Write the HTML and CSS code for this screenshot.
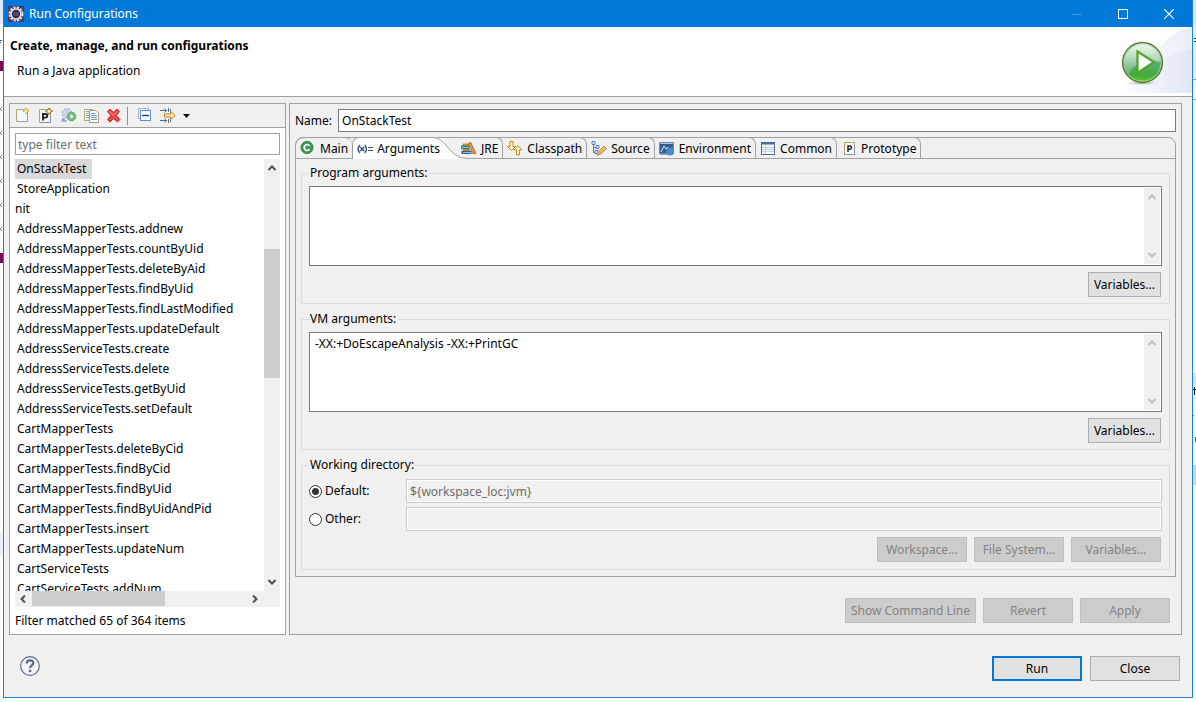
FILE: index.html
```html
<!DOCTYPE html>
<html lang="en">
<head>
  <meta charset="UTF-8">
  <title>Run Configurations</title>
  <link rel="stylesheet" href="styles.css">
</head>
<body>

  <!-- Editor window showing behind the dialog, left -->
  <svg class="behind" viewBox="0 0 3 702" aria-hidden="true">
    <rect width="3" height="24" fill="#dfe6f5"/>
    <path d="M0 40.500h2M0 42.500h1" stroke="#33507e"/>
    <rect y="61" width="3" height="10" fill="#7f0055"/>
    <path d="M2 107l-2 2 2 2M2 131l-2 2 2 2M2 155l-2 2 2 2M2 179l-2 2 2 2M2 203l-2 2 2 2M2 227l-2 2 2 2" fill="none" stroke="#6f8fd6"/>
    <rect y="253" width="3" height="10" fill="#7f0055"/>
    <rect y="532" width="3" height="24" fill="#e8f0fc"/>
  </svg>

  <div class="dialog">
    <!-- Title bar -->
    <div class="titlebar">
      <svg class="icon" viewBox="0 0 16 16">
        <rect width="16" height="16" fill="#4b3a6e"/>
        <circle cx="8" cy="8" r="6.500" fill="none" stroke="#e9e4dc" stroke-width="2" stroke-dasharray="2.200 1.200"/>
        <circle cx="8" cy="8" r="5" fill="#35294f" stroke="#e9e4dc" stroke-width="1.600"/>
        <path d="M5 7h6M5 9h6" stroke="#6f6690"/>
      </svg>
      <span class="title">Run Configurations</span>
      <div class="win-buttons">
        <button type="button" aria-label="Minimize" disabled><svg viewBox="0 0 10 10"><path d="M0 5.500h10" stroke="#3f9ae6"/></svg></button>
        <button type="button" aria-label="Maximize"><svg viewBox="0 0 10 10"><rect x=".5" y=".5" width="9" height="9" fill="none" stroke="#fff"/></svg></button>
        <button type="button" aria-label="Close window"><svg viewBox="0 0 10 10"><path d="M0 0l10 10M10 0L0 10" stroke="#fff" stroke-width="1.200"/></svg></button>
      </div>
    </div>

    <!-- Header -->
    <div class="header">
      <div class="header-text">
        <h1>Create, manage, and run configurations</h1>
        <p>Run a Java application</p>
      </div>
      <svg class="banner" viewBox="0 0 78 69">
        <defs>
          <linearGradient id="sky"><stop offset="0" stop-color="#fff"/><stop offset="1" stop-color="#dfe6f7"/></linearGradient>
          <linearGradient id="sky2" x1="0" y1="1" x2="1" y2="0"><stop offset="0" stop-color="#fff"/><stop offset="1" stop-color="#e6ecf8"/></linearGradient>
          <linearGradient id="ball" x1="0" y1="0" x2="0" y2="1"><stop offset="0" stop-color="#b5dcb4"/><stop offset=".5" stop-color="#5fae72"/><stop offset=".8" stop-color="#45a844"/><stop offset="1" stop-color="#5cc81c"/></linearGradient>
          <linearGradient id="shine" x1="0" y1="0" x2="0" y2="1"><stop offset="0" stop-color="#fff" stop-opacity=".75"/><stop offset="1" stop-color="#fff" stop-opacity=".15"/></linearGradient>
          <radialGradient id="shade"><stop offset="0" stop-color="#999"/><stop offset="1" stop-color="#fff" stop-opacity="0"/></radialGradient>
        </defs>
        <path d="M78 0C55 4 36 24 28 66H78z" fill="url(#sky2)"/>
        <path d="M78 22C52 24 32 44 4 66H78z" fill="url(#sky)"/>
        <ellipse cx="28" cy="56" rx="22" ry="3" fill="url(#shade)"/>
        <circle cx="28.500" cy="35.500" r="20" fill="url(#ball)" stroke="#6a7440" stroke-width="1.300"/>
        <circle cx="28.500" cy="35.500" r="18.500" fill="none" stroke="#cfeacb" stroke-opacity=".6"/>
        <path d="M10.500 36a18 18 0 0 1 36-1C37 33 20 34 15 47c-3-3-4-7-4-11z" fill="url(#shine)"/>
        <path d="M23.500 24.500V46L40 35z" fill="#fff" stroke="#4fa528" stroke-width="2.200"/>
      </svg>
    </div>

    <div class="main">
      <!-- Configuration list -->
      <div class="panel side">
        <div class="toolbar">
          <button type="button" aria-label="New launch configuration">
            <svg class="icon" viewBox="0 0 16 16"><path d="M1.500 1.500h11v12h-11z" fill="#f4f7fb" stroke="#b3a57a"/><path d="M2 13.500h10.500v-7" fill="none" stroke="#8f9bb5"/><path d="M11 0v6M8 3h6" stroke="#d9b44a" stroke-width="2"/><path d="M11 1v4M9 3h4" stroke="#fff3b8"/></svg>
          </button>
          <button type="button" aria-label="New prototype">
            <svg class="icon" viewBox="0 0 16 16"><path d="M1.500 1.500h11v13h-11z" fill="#f6f7f2" stroke="#a8a184"/><path d="M2 14.500h10.500v-7" fill="none" stroke="#7f93b3"/><path d="M5 12.500V6h2.500a1.800 1.800 0 0 1 0 3.600H5" fill="none" stroke="#222" stroke-width="1.900"/><path d="M11 0l1.200 2.100L14.500 3.200l-2.300 1.200L11 6.500l-1.200-2.100L7.500 3.200l2.300-1.100z" fill="#fff3b8" stroke="#806414" stroke-width=".9"/></svg>
          </button>
          <button type="button" aria-label="Export">
            <svg class="icon" viewBox="0 0 16 16"><circle cx="6" cy="5.500" r="4.500" fill="#dce3ee" stroke="#b5c1d6" stroke-width="2" stroke-dasharray="2.500 1"/><circle cx="6" cy="5.500" r="3.500" fill="#ccd6e8"/><path d="M0 14l6-1-4-3z" fill="#8fb0dc"/><path d="M1 10.500l4 3" stroke="#7a9cce" stroke-width="1.500"/><circle cx="10.500" cy="8.500" r="4.300" fill="#75bd80" stroke="#5ca66a"/><path d="M9.500 6.300v4.400l3.200-2.200z" fill="#fff"/></svg>
          </button>
          <button type="button" aria-label="Duplicate">
            <svg class="icon" viewBox="0 0 16 16"><path d="M.5 1.500h8v11h-8z" fill="#f8f7ef" stroke="#b5a76e"/><path d="M2 3.500h3M2 5.500h3M2 7.500h3M2 9.500h3" stroke="#8aa4cc"/><path d="M5.500 2.500h6.500l2.500 2.500v9.500h-9z" fill="#f8f9fb" stroke="#a99c6c"/><path d="M7 5.500h4M7 7.500h6M7 9.500h6M7 11.500h6" stroke="#7796c5"/></svg>
          </button>
          <button type="button" aria-label="Delete">
            <svg class="icon" viewBox="0 0 16 16"><path d="M.5 3.500L3 1l3.500 3.200L10 1l2.500 2.500L9.300 7.500l3.700 4-2.500 2.500-4-3.500L3 14 .5 11.500l3.200-4z" fill="#e5484a" stroke="#c9292d"/><path d="M2 3.500l4.500 3.500 4-3.500" fill="none" stroke="#f3908e"/></svg>
          </button>
          <span class="sep"></span>
          <button type="button" aria-label="Collapse all">
            <svg class="icon" viewBox="0 0 16 16"><rect x="1.500" y=".5" width="10" height="10" fill="#eaf2fb" stroke="#9db9dc"/><rect x="3.500" y="2.500" width="10" height="10" fill="#f3fafe" stroke="#6b8fc0"/><path d="M5 7.500h7" stroke="#123d7c" stroke-width="1.300"/></svg>
          </button>
          <button type="button" aria-label="Filter">
            <svg class="icon" viewBox="0 0 16 16"><path d="M0 2.500h7M0 12.500h7M4.500 .5l2 2-2 2M4.500 10.500l2 2-2 2" fill="none" stroke="#4c7191"/><path d="M8.500 0v4M10.500 1v3M8.500 11v4M10.500 11v3" stroke="#4c7191"/><path d="M4.500 6h6V3.500l4.800 4-4.800 4V9h-6z" fill="#ffe8a8" stroke="#b9812b"/></svg>
          </button>
          <button type="button" class="drop" aria-label="Filter menu"><svg viewBox="0 0 7 4"><path d="M0 0h7L3.500 4z" fill="#111"/></svg></button>
        </div>

        <div class="side-body">
          <input type="text" class="filter" placeholder="type filter text" aria-label="type filter text">
          <div class="tree">
            <ul class="tree-list">
              <li class="selected"><span>OnStackTest</span></li>
              <li>StoreApplication</li>
              <li class="parent">nit</li>
              <li>AddressMapperTests.addnew</li>
              <li>AddressMapperTests.countByUid</li>
              <li>AddressMapperTests.deleteByAid</li>
              <li>AddressMapperTests.findByUid</li>
              <li>AddressMapperTests.findLastModified</li>
              <li>AddressMapperTests.updateDefault</li>
              <li>AddressServiceTests.create</li>
              <li>AddressServiceTests.delete</li>
              <li>AddressServiceTests.getByUid</li>
              <li>AddressServiceTests.setDefault</li>
              <li>CartMapperTests</li>
              <li>CartMapperTests.deleteByCid</li>
              <li>CartMapperTests.findByCid</li>
              <li>CartMapperTests.findByUid</li>
              <li>CartMapperTests.findByUidAndPid</li>
              <li>CartMapperTests.insert</li>
              <li>CartMapperTests.updateNum</li>
              <li>CartServiceTests</li>
              <li>CartServiceTests.addNum</li>
            </ul>
            <div class="vscroll">
              <svg viewBox="0 0 8 6"><path d="M.5 5L4 1.500 7.500 5"/></svg>
              <div class="track"><div class="thumb"></div></div>
              <svg viewBox="0 0 8 6"><path d="M.5 1L4 4.500 7.500 1"/></svg>
            </div>
          </div>
          <div class="hscroll">
            <svg viewBox="0 0 6 8"><path d="M5 .5L1.500 4 5 7.500"/></svg>
            <div class="track"><div class="thumb"></div></div>
            <svg viewBox="0 0 6 8"><path d="M1 .5L4.500 4 1 7.500"/></svg>
          </div>
          <p class="status">Filter matched 65 of 364 items</p>
        </div>
      </div>

      <!-- Selected configuration -->
      <div class="panel config">
        <div class="name-row">
          <label for="name">Name:</label>
          <input type="text" id="name" value="OnStackTest">
        </div>

        <div class="folder">
          <div class="tabs" role="tablist">
            <button type="button" role="tab">
              <svg class="icon" viewBox="0 0 16 16"><circle cx="7" cy="6.500" r="6" fill="#3c9c56" stroke="#27783f"/><path d="M9.600 4.700a3 3 0 1 0 0 3.600" fill="none" stroke="#fff" stroke-width="1.700"/></svg>
              Main
            </button>
            <button type="button" role="tab" class="active" aria-selected="true">
              <svg class="swoosh" viewBox="0 0 34 22"><path d="M0 0C14 0 15 21 34 21.500V22H0z" fill="#fff"/><path d="M0 .5C15 1 15 21 34 21.500" fill="none" stroke="#a0a0a0"/></svg>
              <svg class="icon" viewBox="0 0 16 16"><path d="M2.800 4Q-.5 8 2.800 12M7.700 4q3.500 4 0 8M3.200 6l4 4M7.200 6l-4 4" fill="none" stroke="#3e5475" stroke-width="1.500"/><path d="M11 6.500h5M11 9.500h5" stroke="#3e5475" stroke-width="1.200"/></svg>
              <span>Arguments</span>
            </button>
            <button type="button" role="tab">
              <svg class="icon" viewBox="0 0 16 16"><path d="M1.500 2.500h7v3h-7z" fill="#d9852c"/><path d="M0 4.500h8.500v3.500H0z" fill="#238c83"/><path d="M1.500 8h7.500v2H1.500z" fill="#b9822c"/><path d="M.5 10h10v3H.5z" fill="#355f91"/><path d="M1 6.500h7M2 11.500h8" stroke="#8cc4c0"/><path d="M7 2l3-1L15.500 13H11.500z" fill="#c56a22"/><path d="M9 2.500l4 10" stroke="#f0b276"/></svg>
              JRE
            </button>
            <button type="button" role="tab">
              <svg class="icon" viewBox="0 0 16 16"><path d="M3 .5h3v5h2.500l-4 4-4-4H3zM9.500 14h3V9h2.500l-4-4.300L7 9h2.500z" fill="#fff3c2" stroke="#bd8a22"/></svg>
              Classpath
            </button>
            <button type="button" role="tab">
              <svg class="icon" viewBox="0 0 16 16"><path d="M2.500 3v9M2.500 6.500h4M2.500 11.500h3" fill="none" stroke="#5c7ba8"/><path d="M1 .5h3v3H1zM5 4.500h3v3H5zM4 9.500h3v3H4z" fill="#dce9f8" stroke="#4a73ae" stroke-width=".9"/><path d="M6 14.500l1.500-4 5.500-5.500 2.500 2.500L10 13z" fill="#f1b36a" stroke="#c07b3c" stroke-width=".8"/></svg>
              Source
            </button>
            <button type="button" role="tab">
              <svg class="icon" viewBox="0 0 16 16"><rect x=".5" y="1.500" width="14" height="11" fill="#355d8f" stroke="#6c8db5"/><path d="M1 2.500h13" stroke="#a9c2df"/><path d="M2 11l3-6 2 3 2-2" fill="none" stroke="#dce8f5"/><circle cx="11" cy="10.500" r="4" fill="#4a8ac8"/><path d="M1 13.500h7" stroke="#8ba0ba"/></svg>
              Environment
            </button>
            <button type="button" role="tab">
              <svg class="icon" viewBox="0 0 16 16"><rect x="1.500" y="1.500" width="13" height="12" fill="#f2f6fc" stroke="#5a6f96"/><path d="M1 2.500h14" stroke="#4e6690" stroke-width="2"/><path d="M5.500 4v9M2 6.500h12M2 8.500h12M2 10.500h12" stroke="#c3d1e6"/></svg>
              Common
            </button>
            <button type="button" role="tab">
              <svg class="icon" viewBox="0 0 16 16"><path d="M3.500 1.500h10v12h-10z" fill="#f8f9fb" stroke="#b3a15a"/><path d="M3 13.500h10.500v-8" fill="none" stroke="#7f93b3"/><path d="M7 11V5h1.800a1.600 1.600 0 0 1 0 3.300H7" fill="none" stroke="#222" stroke-width="1.500"/></svg>
              Prototype
            </button>
          </div>

          <div class="tab-page">
            <fieldset>
              <legend><label for="program-args">Program arguments:</label></legend>
              <div class="textbox">
                <textarea id="program-args"></textarea>
                <div class="vscroll off">
                  <svg viewBox="0 0 8 6"><path d="M.5 5L4 1.500 7.500 5"/></svg>
                  <svg viewBox="0 0 8 6"><path d="M.5 1L4 4.500 7.500 1"/></svg>
                </div>
              </div>
              <div class="group-buttons"><button type="button" class="btn compact">Variables...</button></div>
            </fieldset>

            <fieldset>
              <legend><label for="vm-args">VM arguments:</label></legend>
              <div class="textbox">
                <textarea id="vm-args" spellcheck="false">-XX:+DoEscapeAnalysis -XX:+PrintGC</textarea>
                <div class="vscroll off">
                  <svg viewBox="0 0 8 6"><path d="M.5 5L4 1.500 7.500 5"/></svg>
                  <svg viewBox="0 0 8 6"><path d="M.5 1L4 4.500 7.500 1"/></svg>
                </div>
              </div>
              <div class="group-buttons"><button type="button" class="btn compact">Variables...</button></div>
            </fieldset>

            <fieldset class="workdir">
              <legend>Working directory:</legend>
              <div class="dir-row">
                <label><input type="radio" name="dir" checked>Default:</label>
                <input type="text" value="${workspace_loc:jvm}" aria-label="Default directory" disabled>
              </div>
              <div class="dir-row">
                <label><input type="radio" name="dir">Other:</label>
                <input type="text" aria-label="Other directory" disabled>
              </div>
              <div class="group-buttons">
                <button type="button" class="btn" disabled>Workspace...</button>
                <button type="button" class="btn" disabled>File System...</button>
                <button type="button" class="btn" disabled>Variables...</button>
              </div>
            </fieldset>
          </div>
        </div>

        <div class="config-buttons">
          <button type="button" class="btn compact" disabled>Show Command Line</button>
          <button type="button" class="btn" disabled>Revert</button>
          <button type="button" class="btn" disabled>Apply</button>
        </div>
      </div>
    </div>

    <!-- Footer -->
    <div class="footer">
      <button type="button" class="help" aria-label="Help">
        <svg viewBox="0 0 20 20"><circle cx="10" cy="10" r="9.300" fill="#f4f6fa" stroke="#5a6b8c" stroke-width="1.200"/><path d="M6.700 7.500c0-4.300 6.900-4 6.600-.3C13.100 9.400 10 9.300 10 12.300" fill="none" stroke="#5a6b8c" stroke-width="2.200"/><rect x="8.800" y="13.800" width="2.400" height="2.400" fill="#5a6b8c"/></svg>
      </button>
      <button type="button" class="btn primary">Run</button>
      <button type="button" class="btn">Close</button>
    </div>
  </div>

  <!-- Editor window showing behind the dialog, right -->
  <svg class="behind" viewBox="0 0 3 702" aria-hidden="true">
    <rect width="3" height="24" fill="#dfe3f6"/>
    <rect y="24" width="3" height="55" fill="#eceff8"/>
    <path d="M1 38.500h2M1 41.500h2" stroke="#223"/>
    <path d="M0 79.500h3M0 99.500h3" stroke="#a0a0a0"/>
    <rect y="373" width="3" height="12" fill="#dce3f5"/>
    <path d="M0 389.500h3M1.500 387v8" stroke="#112"/>
    <path d="M0 415.500h1" stroke="#4a6fa5"/>
    <path d="M2.500 437v5" stroke="#2a7a55"/>
    <rect y="465" width="3" height="20" fill="#d4d4d4"/>
  </svg>

</body>
</html>
```
FILE: styles.css
```css
:root {
  --blue: #0078d7;
  --face: #f0f0f0;
  --line: #a0a0a0;
  --light-line: #dcdcdc;
}
* { margin: 0; padding: 0; box-sizing: border-box; }
body {
  display: flex;
  align-items: flex-start;
  min-height: 100vh;
  background: #fff;
  color: #000;
  font-family: 'Noto Sans', 'Open Sans', sans-serif;
  font-size: 12px;
  line-height: 18px;
}
button, input, textarea { font: inherit; color: inherit; }
button { background: none; border: none; }
ul { list-style: none; }
svg { display: block; flex: none; }
.icon { width: 16px; height: 16px; }
.behind { width: 3px; height: 702px; }

.dialog {
  flex: 1;
  min-width: 0;
  background: var(--face);
  border: 1px solid #1883d7;
  border-top: none;
}

/* Title bar */
.titlebar {
  display: flex;
  align-items: center;
  height: 27px;
  padding-left: 4px;
  background: var(--blue);
  color: #fff;
}
.title { flex: 1; padding-left: 5px; }
.win-buttons { display: flex; }
.win-buttons button {
  display: flex;
  align-items: center;
  justify-content: center;
  width: 46px;
  height: 27px;
}
.win-buttons svg { width: 10px; height: 10px; }

/* Header */
.header {
  display: flex;
  justify-content: space-between;
  height: 70px;
  background: #fff;
  border-bottom: 1px solid var(--line);
}
.header-text { padding: 10px 6px; }
.header h1 { font-size: 12px; line-height: 18px; }
.header p { padding: 7px; }
.banner { width: 78px; height: 69px; }

.main {
  display: grid;
  grid-template-columns: 277px 1fr;
  gap: 3px;
  padding: 6px 10px 0 5px;
}
.panel { border: 1px solid var(--line); min-width: 0; }

/* Left side */
.side { display: flex; flex-direction: column; background: #fff; }
.toolbar {
  display: flex;
  align-items: center;
  gap: 7px;
  height: 24px;
  padding-left: 5px;
  background: var(--face);
  border-bottom: 1px solid var(--line);
}
.sep { width: 1px; height: 18px; margin: 0 2px 0 -3px; background: #8c8c8c; }
.drop svg { width: 7px; height: 4px; }
.side-body {
  flex: 1;
  display: flex;
  flex-direction: column;
  padding: 5px 5px 4px;
}
.filter {
  height: 22px;
  padding: 0 2px;
  border: 1px solid var(--line);
  background: #fff;
}
.filter::placeholder { color: #6d6d6d; opacity: 1; }
.tree { flex: 1 1 0; display: flex; min-height: 0; margin-top: 4px; }
.tree-list { flex: 1; min-width: 0; overflow: hidden; white-space: nowrap; }
.tree-list li { height: 20px; line-height: 20px; padding-left: 2px; }
.tree-list .parent { padding-left: 0; }
.tree-list .selected { padding-left: 0; }
.selected span { display: inline-block; padding: 0 6px 0 2px; background: #d9d9d9; }
.vscroll {
  flex: none;
  display: flex;
  flex-direction: column;
  align-items: center;
  justify-content: space-between;
  width: 16px;
  padding: 6px 0;
  background: var(--face);
}
.vscroll svg { width: 8px; height: 6px; }
.vscroll path, .hscroll path { fill: none; stroke: #505050; stroke-width: 2; }
.vscroll .track { flex: 1; width: 100%; padding-top: 78px; }
.vscroll .thumb { height: 129px; background: #cdcdcd; }
.vscroll.off path { stroke: #bfbfbf; }
.hscroll {
  display: flex;
  align-items: center;
  height: 16px;
  padding: 0 22px 0 5px;
  background: var(--face);
}
.hscroll svg { width: 6px; height: 8px; }
.hscroll .track { flex: 1; height: 100%; padding-left: 6px; }
.hscroll .thumb { width: 133px; height: 15px; background: #cdcdcd; }
.status { padding: 5px 0 0; }

/* Right side */
.config { padding: 5px 5px 6px; }
.name-row { display: flex; align-items: center; gap: 6px; }
.name-row input {
  flex: 1;
  height: 23px;
  padding: 0 3px;
  border: 1px solid #7a7a7a;
  background: #fff;
}
.folder {
  margin-top: 5px;
  border: 1px solid var(--line);
  border-radius: 8px 8px 0 0;
}
.tabs {
  display: flex;
  height: 21px;
  border-bottom: 1px solid var(--line);
}
.tabs button {
  display: flex;
  align-items: center;
  gap: 4px;
  height: 21px;
  margin-top: -1px;
  padding: 1px 4px 0;
  border-top: 1px solid var(--line);
  border-right: 1px solid var(--line);
  border-radius: 0 7px 0 0;
}
.tabs button:first-child { border-top-left-radius: 8px; border-right: none; }
.tabs .active {
  position: relative;
  height: 22px;
  margin-right: 12px;
  padding: 0 5px 0 4px;
  background: #fff;
  border-left: 1px solid var(--line);
  border-right: none;
  border-radius: 7px 0 0 0;
}
.active .swoosh { position: absolute; top: -1px; left: calc(100% - 12px); width: 34px; height: 22px; }
.active span { position: relative; }
.tab-page {
  display: flex;
  flex-direction: column;
  gap: 6px;
  padding: 5px 5px 6px;
}
fieldset { border: 1px solid var(--light-line); padding: 4px 7px 6px; min-width: 0; }
legend { padding: 0 2px 0 1px; }
.textbox {
  display: flex;
  height: 80px;
  padding: 1px;
  border: 1px solid #7a7a7a;
  background: #fff;
}
.textbox textarea {
  flex: 1;
  min-width: 0;
  padding: 1px 4px;
  border: none;
  outline: none;
  resize: none;
  overflow: hidden;
}
.group-buttons { display: flex; justify-content: flex-end; gap: 7px; padding: 6px 1px 0 0; }
.workdir { padding: 5px 7px 7px; }
.workdir .group-buttons { padding-top: 2px; }
.dir-row { display: flex; align-items: center; margin-bottom: 4px; }
.dir-row label { display: flex; align-items: center; gap: 3px; width: 97px; }
.dir-row input[type=text] {
  flex: 1;
  min-width: 0;
  height: 24px;
  padding: 0 3px;
  border: 1px solid #ccc;
  box-shadow: inset 0 0 0 1px #fff;
  background: var(--face);
  color: #6d6d6d;
}
.dir-row input[type=radio] {
  appearance: none;
  width: 13px;
  height: 13px;
  border: 1px solid #333;
  border-radius: 50%;
  background: #fff;
}
.dir-row input[type=radio]:checked { background: radial-gradient(circle, #333 0 3px, #fff 4px); }
.btn {
  min-width: 90px;
  height: 25px;
  padding: 0 4px;
  border: 1px solid #adadad;
  background: #e1e1e1;
}
.btn.compact { min-width: 73px; padding: 0 5px; }
.btn:disabled { background: #ccc; border-color: #bfbfbf; color: #838383; }
.btn.primary { border: 2px solid var(--blue); }
.config-buttons { display: flex; justify-content: flex-end; gap: 7px; padding: 21px 6px 5px 0; }

/* Footer */
.footer {
  display: flex;
  align-items: flex-start;
  gap: 8px;
  padding: 21px 12px 16px 16px;
}
.help { margin-right: auto; }
.help svg { width: 20px; height: 20px; }
```
